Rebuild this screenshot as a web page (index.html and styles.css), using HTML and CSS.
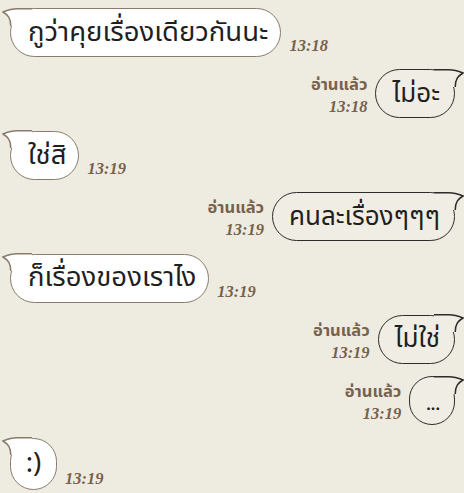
FILE: index.html
```html
<!DOCTYPE html>
<html lang="th">
<head>
    <meta charset="UTF-8">
    <meta name="viewport" content="width=device-width, initial-scale=1.0">
    <title>แชท</title>
    <link rel="stylesheet" href="styles.css">
</head>
<body>
    <div class="chat">
        <!-- ข้อความ 1 -->
        <div class="row in">
            <div class="bubble">
                <svg class="tail" width="34" height="24" viewBox="0 0 34 24"><path class="tail-fill" d="M30 0.75 L15 0.75 C10 0.75 6 2 1 4 C6 7 8.75 10 8.75 18 L30 18 Z"/><path class="tail-line" d="M30 0.75 L15 0.75 C10 0.75 6 2 1 4 C6 7 8.75 10 8.75 18"/></svg>
                <span class="text">กูว่าคุยเรื่องเดียวกันนะ</span>
            </div>
            <div class="meta"><span class="time">13:18</span></div>
        </div>

        <div class="row out">
            <div class="meta"><span class="read">อ่านแล้ว</span><span class="time">13:18</span></div>
            <div class="bubble">
                <svg class="tail" width="34" height="24" viewBox="0 0 34 24"><path class="tail-fill" d="M30 0.75 L15 0.75 C10 0.75 6 2 1 4 C6 7 8.75 10 8.75 18 L30 18 Z"/><path class="tail-line" d="M30 0.75 L15 0.75 C10 0.75 6 2 1 4 C6 7 8.75 10 8.75 18"/></svg>
                <span class="text">ไม่อะ</span>
            </div>
        </div>

        <div class="row in">
            <div class="bubble">
                <svg class="tail" width="34" height="24" viewBox="0 0 34 24"><path class="tail-fill" d="M30 0.75 L15 0.75 C10 0.75 6 2 1 4 C6 7 8.75 10 8.75 18 L30 18 Z"/><path class="tail-line" d="M30 0.75 L15 0.75 C10 0.75 6 2 1 4 C6 7 8.75 10 8.75 18"/></svg>
                <span class="text">ใช่สิ</span>
            </div>
            <div class="meta"><span class="time">13:19</span></div>
        </div>

        <div class="row out">
            <div class="meta"><span class="read">อ่านแล้ว</span><span class="time">13:19</span></div>
            <div class="bubble">
                <svg class="tail" width="34" height="24" viewBox="0 0 34 24"><path class="tail-fill" d="M30 0.75 L15 0.75 C10 0.75 6 2 1 4 C6 7 8.75 10 8.75 18 L30 18 Z"/><path class="tail-line" d="M30 0.75 L15 0.75 C10 0.75 6 2 1 4 C6 7 8.75 10 8.75 18"/></svg>
                <span class="text">คนละเรื่องๆๆๆ</span>
            </div>
        </div>

        <div class="row in">
            <div class="bubble">
                <svg class="tail" width="34" height="24" viewBox="0 0 34 24"><path class="tail-fill" d="M30 0.75 L15 0.75 C10 0.75 6 2 1 4 C6 7 8.75 10 8.75 18 L30 18 Z"/><path class="tail-line" d="M30 0.75 L15 0.75 C10 0.75 6 2 1 4 C6 7 8.75 10 8.75 18"/></svg>
                <span class="text">ก็เรื่องของเราไง</span>
            </div>
            <div class="meta"><span class="time">13:19</span></div>
        </div>

        <div class="row out">
            <div class="meta"><span class="read">อ่านแล้ว</span><span class="time">13:19</span></div>
            <div class="bubble">
                <svg class="tail" width="34" height="24" viewBox="0 0 34 24"><path class="tail-fill" d="M30 0.75 L15 0.75 C10 0.75 6 2 1 4 C6 7 8.75 10 8.75 18 L30 18 Z"/><path class="tail-line" d="M30 0.75 L15 0.75 C10 0.75 6 2 1 4 C6 7 8.75 10 8.75 18"/></svg>
                <span class="text">ไม่ใช่</span>
            </div>
        </div>

        <div class="row out">
            <div class="meta"><span class="read">อ่านแล้ว</span><span class="time">13:19</span></div>
            <div class="bubble small">
                <svg class="tail" width="34" height="24" viewBox="0 0 34 24"><path class="tail-fill" d="M30 0.75 L15 0.75 C10 0.75 6 2 1 4 C6 7 8.75 10 8.75 18 L30 18 Z"/><path class="tail-line" d="M30 0.75 L15 0.75 C10 0.75 6 2 1 4 C6 7 8.75 10 8.75 18"/></svg>
                <span class="text dots">...</span>
            </div>
        </div>

        <div class="row in">
            <div class="bubble small round">
                <svg class="tail" width="34" height="24" viewBox="0 0 34 24"><path class="tail-fill" d="M30 0.75 L15 0.75 C10 0.75 6 2 1 4 C6 7 8.75 10 8.75 18 L30 18 Z"/><path class="tail-line" d="M30 0.75 L15 0.75 C10 0.75 6 2 1 4 C6 7 8.75 10 8.75 18"/></svg>
                <span class="text">:)</span>
            </div>
            <div class="meta"><span class="time">13:19</span></div>
        </div>
    </div>
</body>
</html>
```

FILE: styles.css
```css
body {
    margin: 0;
    background-color: #eeebe1;
    font-family: 'Noto Sans Thai', 'Noto Sans', 'DejaVu Sans', sans-serif;
    color: #1f1f1f;
}
.chat {
    display: flex;
    flex-direction: column;
    gap: 12.4px;
    padding: 8px 9px 0 10px;
}
.row {
    display: flex;
    align-items: flex-end;
    gap: 8px;
}
.row.out {
    justify-content: flex-end;
}
.bubble {
    position: relative;
    height: 49px;
    box-sizing: border-box;
    display: flex;
    align-items: center;
    padding: 0 12px 0 17px;
    border-radius: 25px;
    border: 1.5px solid #8a7b6c;
    background-color: #fff;
}
.row.out .bubble {
    border-color: #2c2c2c;
    background-color: #f0ede4;
    padding: 0 14px 0 16px;
}
.bubble.small {
    padding: 0 10px;
    min-width: 43px;
    justify-content: center;
}
.bubble.round {
    height: 52px;
    min-width: 47px;
    border-radius: 26px;
}
.text {
    position: relative;
    z-index: 1;
    font-size: 27.5px;
    line-height: 1;
    white-space: nowrap;
}
.row.out .text {
    font-size: 26px;
}
.row.out .dots {
    font-size: 16px;
    font-weight: bold;
    padding-top: 8px;
}
/* หางของกล่องข้อความ */
.tail {
    position: absolute;
    top: -1.5px;
    left: -9.5px;
}
.row.out .tail {
    left: auto;
    right: -9.5px;
    transform: scaleX(-1);
}
.tail-fill {
    fill: #fff;
}
.row.out .tail-fill {
    fill: #f0ede4;
}
.tail-line {
    fill: none;
    stroke: #8a7b6c;
    stroke-width: 1.5;
}
.row.out .tail-line {
    stroke: #2c2c2c;
}
.meta {
    display: flex;
    flex-direction: column;
    align-items: flex-end;
    gap: 2px;
    padding-bottom: 2px;
    color: #76624d;
}
.read {
    font-size: 16.5px;
    font-weight: bold;
    line-height: 22px;
}
.time {
    font-family: 'Liberation Serif', serif;
    font-style: italic;
    font-weight: bold;
    font-size: 16.5px;
    line-height: 18px;
}
```
